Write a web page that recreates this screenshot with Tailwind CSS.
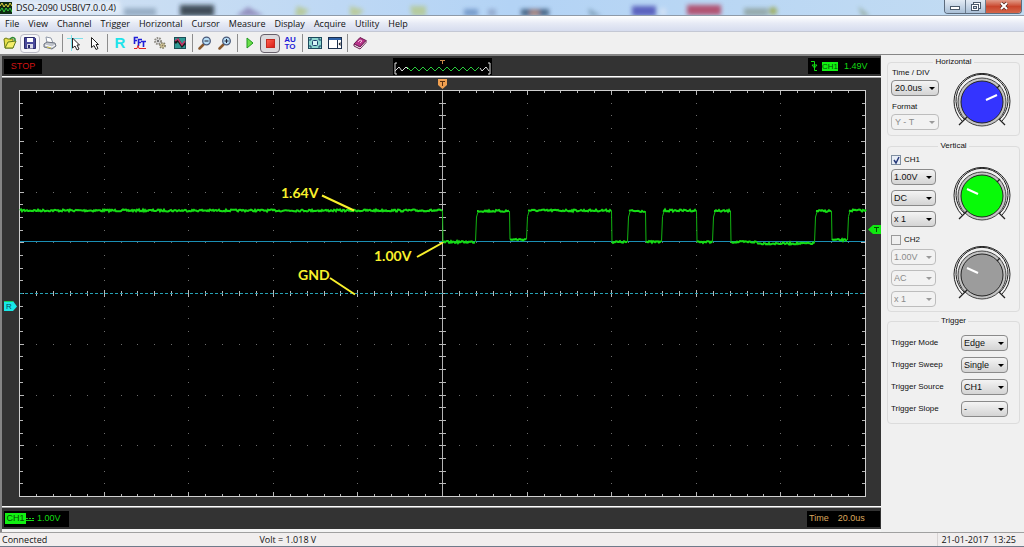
<!DOCTYPE html>
<html lang="en">
<head>
<meta charset="utf-8">
<title>DSO-2090 USB(V7.0.0.4)</title>
<script src="https://cdn.jsdelivr.net/npm/@tailwindcss/browser@4"></script>
</head>
<body class="min-h-screen flex flex-col bg-[#f0f0f0] font-['Open_Sans',sans-serif] text-[9px] text-[#111] overflow-hidden">

<!-- Title bar -->
<header class="relative h-4 shrink-0 flex items-center bg-gradient-to-r from-[#d3e2f2] via-[#b3d3f5] to-[#c3dcf2] border-b border-[#8e9aa8]">
  <svg class="absolute inset-0 w-full h-full" viewBox="0 0 1024 15" preserveAspectRatio="none" aria-hidden="true">
    <defs><filter id="glass" x="-20%" y="-60%" width="140%" height="220%"><feGaussianBlur stdDeviation="2"/></filter></defs>
    <g filter="url(#glass)" opacity=".85">
      <rect x="124" y="8" width="32" height="8" fill="#8fa6bd"/>
      <rect x="180" y="5" width="34" height="11" fill="#2c3440"/>
      <path d="M236 16l12-9 16 9z" fill="#8a83b5"/>
      <path d="M297 6l12 4-6 6h-8z" fill="#b5c78c"/>
      <path d="M350 6l14 4-6 6h-8z" fill="#b9c98f"/>
      <path d="M410 6h16v10h-14z" fill="#b5c98f"/>
      <rect x="464" y="9" width="14" height="7" fill="#6d93c4"/><rect x="488" y="9" width="8" height="7" fill="#8fa5c9"/>
      <rect x="521" y="9" width="28" height="7" fill="#3b5878"/><rect x="530" y="10" width="9" height="6" fill="#a5786a"/>
      <path d="M588 8l14 8h-12z" fill="#7b9cb5"/>
      <rect x="632" y="6" width="24" height="10" fill="#4b4fb5"/><rect x="660" y="8" width="6" height="8" fill="#d5e2f5"/>
      <rect x="687" y="5" width="34" height="10" fill="#b03c5c"/>
      <rect x="744" y="8" width="24" height="8" fill="#8fa3a0"/><circle cx="773" cy="11" r="4" fill="#9aa84e"/>
      <path d="M858 6l12 10h-8z" fill="#93a99a"/>
      <rect x="10" y="1" width="110" height="13" fill="#e6eef8"/>
    </g>
  </svg>
  <svg class="relative w-3 h-3 shrink-0" viewBox="0 0 12 12" aria-hidden="true">
    <rect width="12" height="12" fill="#0d2a12"/>
    <path d="M0 4l2-3 2 4 2-3 2 3 2-4 2 3" stroke="#e2d23c" fill="none"/>
    <path d="M0 9l2-3 2 4 2-4 2 3 2-3 2 4" stroke="#35c93e" fill="none"/>
  </svg>
  <h1 class="relative ml-1 flex-1">DSO-2090 USB(V7.0.0.4)</h1>
  <div class="relative self-start flex h-[14px] mr-[2px] rounded-b border border-t-0 border-[#5c6b7c] overflow-hidden">
    <button aria-label="Minimize" class="w-[21px] flex justify-center bg-gradient-to-b from-[#e3ebf4] to-[#a9bfd6] border-r border-[#6b7b8c]"><svg class="w-[10px] h-3" viewBox="0 0 10 12"><rect x=".5" y="6.500" width="9" height="3" fill="#fff" stroke="#4b5a6b"/></svg></button>
    <button aria-label="Restore" class="w-5 flex justify-center bg-gradient-to-b from-[#e3ebf4] to-[#a9bfd6] border-r border-[#6b7b8c]"><svg class="w-[10px] h-3" viewBox="0 0 10 12"><rect x="2.500" y="2.500" width="7" height="6" fill="#fff" stroke="#4b5a6b"/><rect x=".5" y="4.500" width="7" height="6" fill="#fff" stroke="#4b5a6b"/><rect x="2.500" y="6.500" width="3" height="2" fill="#cfdbe8" stroke="#4b5a6b"/></svg></button>
    <button aria-label="Close" class="w-[35px] flex justify-center bg-gradient-to-b from-[#e09a88] via-[#c9452c] to-[#d4664a]"><svg class="w-[10px] h-3" viewBox="0 0 10 12"><path d="M2 3l6 6M8 3L2 9" stroke="#5b2a22" stroke-width="3.500"/><path d="M2 3l6 6M8 3L2 9" stroke="#fff" stroke-width="2"/></svg></button>
  </div>
</header>

<!-- Menu bar -->
<nav class="h-4 shrink-0 flex items-center bg-gradient-to-b from-white via-[#e6eaf5] to-[#d6dcee] border-b border-[#c4c8d4]">
  <button class="pl-[5px] pr-1">File</button><button class="pl-[5px] pr-1">View</button><button class="pl-[5px] pr-1">Channel</button><button class="pl-[5px] pr-1">Trigger</button><button class="pl-[5px] pr-1">Horizontal</button><button class="pl-[5px] pr-1">Cursor</button><button class="pl-[5px] pr-1">Measure</button><button class="pl-[5px] pr-1">Display</button><button class="pl-[5px] pr-1">Acquire</button><button class="pl-[5px] pr-1">Utility</button><button class="pl-[5px] pr-1">Help</button>
</nav>

<!-- Toolbar -->
<div role="toolbar" aria-label="Tools" class="h-[22px] shrink-0 flex items-center">
  <button aria-label="Open" class="w-5 h-5 flex items-center justify-center"><svg class="w-[14px] h-[14px]" viewBox="0 0 14 14"><path d="M1 3l2-1 2 1 5 0v9l-8 0z" fill="#e8e04a" stroke="#6b7a14"/><path d="M2 12l3-6 8-1-3 7z" fill="#f5ee6a" stroke="#5f7a1a"/><path d="M7 3q3-3 5 0v2" fill="none" stroke="#2f8a2f" stroke-width="1.500"/></svg></button>
  <button aria-label="Save" class="w-5 h-[19px] flex items-center justify-center border border-[#b9b9c4] rounded-sm bg-[#f7f7fa]"><svg class="w-3 h-3" viewBox="0 0 12 12"><path d="M.5.5h10l1 1v10H.5z" fill="#4a4a9c" stroke="#2a2a6b"/><rect x="3" y="1" width="6" height="4" fill="#fff"/><rect x="3" y="7" width="6" height="4.500" fill="#d8d8e8"/><rect x="4" y="8" width="2" height="3" fill="#2a2a6b"/></svg></button>
  <button aria-label="Print" class="w-5 h-5 flex items-center justify-center"><svg class="w-[14px] h-[14px]" viewBox="0 0 14 14"><path d="M4 7l-1-6 5 1 2 5z" fill="#fff" stroke="#8f98a8"/><path d="M1 8l3-2 8 1 1 3-4 3-8-2z" fill="#bfc3cb" stroke="#6d7380"/><path d="M2 9l7 2 3-2" fill="none" stroke="#fff"/><path d="M4 11l4 1" stroke="#d5c84a"/></svg></button>
  <span class="w-[5px] h-[18px] flex justify-center"><i class="w-px bg-[#8d8d8d]"></i></span>
  <button aria-label="Cross cursor" class="w-5 h-5 flex items-center justify-center"><svg class="w-4 h-4" viewBox="0 0 16 16"><path d="M0 3.500h16M4.500 0v16" stroke="#7fe0ea"/><path d="M5.500 3l7 7H10l2 4-2 1-2-4-2.500 2z" fill="#fff" stroke="#222"/></svg></button>
  <button aria-label="Pointer" class="w-5 h-5 flex items-center justify-center"><svg class="w-4 h-4" viewBox="0 0 16 16"><path d="M4.500 2.500l7 7H9l2 4-2 1-2-4-2.500 2z" fill="#fff" stroke="#222"/></svg></button>
  <span class="w-[5px] h-[18px] flex justify-center"><i class="w-px bg-[#8d8d8d]"></i></span>
  <button class="w-5 h-5 font-['Liberation_Sans',sans-serif] font-bold text-[15px] leading-5 text-[#1fe3ea]">R</button>
  <button aria-label="FFT" class="w-5 h-5 flex items-center justify-center"><svg class="w-[14px] h-[14px]" viewBox="0 0 14 14"><path d="M1.500 8V1.500H5M1.500 4.500H4M5.500 10V3.500H9M5.500 6.500H8M8 5.500h5M10.500 5.500V11" stroke="#2020d8" stroke-width="1.600" fill="none"/><path d="M1 12.500h3l1-3 1 3h7" stroke="#e02222" fill="none"/></svg></button>
  <button aria-label="Settings" class="w-5 h-5 flex items-center justify-center"><svg class="w-[14px] h-[14px]" viewBox="0 0 14 14"><circle cx="5" cy="5" r="3" fill="#ddd" stroke="#8f8c84" stroke-width="2" stroke-dasharray="1.500 1"/><circle cx="9.500" cy="9.500" r="2.500" fill="#e8dca0" stroke="#85806c" stroke-width="2" stroke-dasharray="1.500 1"/><circle cx="5" cy="5" r="1" fill="#555"/><circle cx="9.500" cy="9.500" r="1" fill="#876"/></svg></button>
  <button aria-label="Waveform" class="w-5 h-5 flex items-center justify-center"><svg class="w-3 h-3" viewBox="0 0 12 12"><rect x=".5" y=".5" width="11" height="11" fill="#2f9a94" stroke="#1c4f58"/><path d="M1 6l3-3 4 6 3-3" stroke="#1a1a1a" stroke-width="2.500" fill="none"/><path d="M1 4l3-2 4 6 3-4" stroke="#c23a6a" stroke-width="1.500" fill="none"/></svg></button>
  <span class="w-[5px] h-[18px] flex justify-center"><i class="w-px bg-[#8d8d8d]"></i></span>
  <button aria-label="Zoom out" class="w-5 h-5 flex items-center justify-center"><svg class="w-[14px] h-[14px]" viewBox="0 0 14 14"><path d="M1.500 12.500l4-4" stroke="#8a5a2c" stroke-width="2.500" stroke-linecap="round"/><circle cx="8.500" cy="5" r="3.800" fill="#b5dcf5" stroke="#4a5a7a" stroke-width="1.300"/><path d="M6.500 5h4" stroke="#223"/></svg></button>
  <button aria-label="Zoom in" class="w-5 h-5 flex items-center justify-center"><svg class="w-[14px] h-[14px]" viewBox="0 0 14 14"><path d="M1.500 12.500l4-4" stroke="#8a5a2c" stroke-width="2.500" stroke-linecap="round"/><circle cx="8.500" cy="5" r="3.800" fill="#b5dcf5" stroke="#4a5a7a" stroke-width="1.300"/><path d="M6.500 5h4M8.500 3v4" stroke="#223"/></svg></button>
  <span class="w-[5px] h-[18px] flex justify-center"><i class="w-px bg-[#8d8d8d]"></i></span>
  <button aria-label="Start" class="w-5 h-5 flex items-center justify-center"><svg class="w-3 h-3" viewBox="0 0 12 12"><path d="M3 1l6 5-6 5z" fill="#6be04a" stroke="#1f9a1f" stroke-linejoin="round"/></svg></button>
  <button aria-label="Stop" class="w-5 h-[19px] flex items-center justify-center border border-[#66606a] rounded-sm bg-[#dcdadd]"><i class="w-[9px] h-[9px] bg-gradient-to-br from-[#ff5a4a] to-[#d81818] border border-[#c42a20]"></i></button>
  <button class="w-5 h-5 font-['Liberation_Sans',sans-serif] font-bold text-[8px] leading-[7px] text-[#1c1cd8]">AU<br>TO</button>
  <span class="w-[5px] h-[18px] flex justify-center"><i class="w-px bg-[#8d8d8d]"></i></span>
  <button aria-label="Full screen" class="w-5 h-5 flex items-center justify-center"><svg class="w-[14px] h-3" viewBox="0 0 14 12"><rect x=".5" y=".5" width="13" height="11" fill="#8fd8d0" stroke="#1c4a5c"/><rect x="4.500" y="3.500" width="5" height="5" rx="1" fill="#d8f5f8" stroke="#1c3f6b"/><path d="M2 4V2h2M10 2h2v2M12 8v2h-2M4 10H2V8" stroke="#1c3f6b" fill="none"/></svg></button>
  <button aria-label="Side panel" class="w-5 h-5 flex items-center justify-center"><svg class="w-[14px] h-3" viewBox="0 0 14 12"><rect x=".5" y=".5" width="13" height="11" fill="#fff" stroke="#1c2f4c"/><path d="M1 2h12" stroke="#2f62a8" stroke-width="2"/><path d="M9.500 3v8" stroke="#1c2f4c"/><path d="M12.500 5L10.500 7l2 2z" fill="#111"/></svg></button>
  <span class="w-[5px] h-[18px] flex justify-center"><i class="w-px bg-[#8d8d8d]"></i></span>
  <button aria-label="Help" class="w-5 h-5 flex items-center justify-center"><svg class="w-[14px] h-[14px]" viewBox="0 0 14 14"><path d="M1 8l6-6.500 6 3L7 11z" fill="#b8348a" stroke="#6b1a50"/><path d="M1 8v2l6 3 6-6.500v-2L7 11z" fill="#fff" stroke="#6b1a50"/><path d="M5 6l2-2 2 1-2 2" fill="none" stroke="#f3b8dc"/></svg></button>
</div>

<div class="flex-1 flex">
  <!-- Oscilloscope -->
  <main class="flex-1 min-w-0 flex flex-col bg-[#333] border-t-2 border-l-2 border-[#868686] font-['Liberation_Sans',sans-serif]">
    <div class="h-5 flex items-center justify-between pl-[2px] pr-px">
      <div class="flex-1"><p class="w-[38px] h-[15px] bg-black text-[9px] leading-[15px] text-center text-[#d01414]">STOP</p></div>
      <svg class="w-[99px] h-[17px] bg-black" viewBox="0 0 99 17" role="img" aria-label="Trigger position">
        <path d="M4 5H2v11h2M95 5h2v11h-2" fill="none" stroke="#ddd"/>
        <path id="preview" fill="none" stroke="#29c93c"/>
        <path d="M2 13l4-4 3 4 4-4 2 2M87 10l2 3 4-4 3 4" fill="none" stroke="#ddd"/>
        <path d="M47 2.500h5M49.500 2v4" stroke="#c98a4a"/>
      </svg>
      <div class="flex-1 flex justify-end">
        <p class="w-[72px] h-[16px] bg-black flex items-center pl-[2px] text-[9px] leading-[9px] text-[#12dc12]">
          <svg class="w-2 h-3 mr-[4px]" viewBox="0 0 8 12" aria-hidden="true"><path d="M1 1.500h3.500v9H7M2 5h5L4.500 8z" fill="none" stroke="#12dc12"/></svg>
          <span class="w-4 h-[9px] bg-[#12f012] text-[#064a06] text-[8px] leading-[9px] text-center">CH1</span>
          <span class="ml-[6px]">1.49V</span>
        </p>
      </div>
    </div>
    <div class="h-[2px] bg-white border-b border-[#a0a0a0]"></div>
    <svg class="w-full h-auto block" viewBox="2 78 879 428" role="img" aria-label="Channel 1 waveform">
      <g shape-rendering="crispEdges">
        <rect x="19" y="90" width="847" height="407" fill="#000"/>
        <g id="grid"></g>
        <path d="M442.500 90V497" stroke="#b4b4b4"/>
        <g id="ticks"></g>
        <path d="M20 241.500H865" stroke="#1b8fb4"/>
        <path d="M20 293.500H865" stroke="#26a0b4" stroke-dasharray="3 2"/>
        <rect x="19.500" y="90.500" width="846" height="406" fill="none" stroke="#d0d0d0"/>
      </g>
      <path id="edges" fill="none" stroke="#12b512"/>
      <path id="trace" fill="none" stroke="#16dc16" stroke-width="2"/>
      <g stroke="#f8f02c" stroke-width="2"><path d="M322 195.500L354 210.500M417 257L443 242.500M330 278L355 294.500"/></g>
      <g fill="#f8f02c" font-family="Lato, sans-serif" font-weight="bold" font-size="14">
        <text x="281" y="198">1.64V</text><text x="374" y="261">1.00V</text><text x="298" y="280">GND</text>
      </g>
      <path d="M438 79h9v6l-4.500 4-4.500-4z" fill="#f0a050"/><path d="M440 81.500h5M442.500 81v5" stroke="#5a3010"/>
      <path d="M868 229.500l5-4.500h8v9h-8z" fill="#10e810"/><path d="M874 227.500h5M876.500 227v5" stroke="#064a06"/>
      <path d="M4 301h9l4 5.500-4 4.500H4z" fill="#18e8e8"/><path d="M4 301.500h9" stroke="#12d060"/><text x="6" y="309" font-family="Liberation Sans, sans-serif" font-size="8" fill="#0a4a5a">R</text>
    </svg>
    <div class="h-[2px] bg-white border-b border-[#a0a0a0]"></div>
    <div class="h-[21px] flex items-center justify-between pl-[2px] pr-px text-[9px]">
      <p class="w-[65px] h-4 bg-black flex items-center text-[#12dc12]">
        <span class="w-[21px] h-[11px] ml-px bg-[#12f012] text-[#064a06] leading-[11px] text-center">CH1</span>
        <svg class="w-2 h-2 mr-[3px]" viewBox="0 0 8 8" aria-hidden="true"><path d="M0 5.500h8" stroke="#12dc12"/><path d="M0 3.500h8" stroke="#12dc12" stroke-dasharray="2 1"/></svg>
        1.00V
      </p>
      <p class="w-[73px] h-4 bg-black flex items-center gap-[9px] pl-[2px] text-[#dba75e]"><span>Time</span><span>20.0us</span></p>
    </div>
    <div class="flex-1 min-h-[2px] bg-[#f4f4f4]"></div>
  </main>

  <!-- Controls -->
  <aside class="w-[143px] shrink-0 border-t border-[#868686] pt-[2px] pl-[6px] pr-1 font-['Liberation_Sans',sans-serif] text-[8px] leading-[10px]">
    <fieldset class="h-[79px] border border-[#dcdcdc] rounded-sm px-[3px] flex">
      <legend class="mx-auto px-[2px]">Horizontal</legend>
      <div class="flex-1 flex flex-col items-start pt-px">
        <label for="tdiv" class="h-3 pl-px">Time / DIV</label>
        <span class="relative flex"><select id="tdiv" class="appearance-none w-12 h-4 pl-[3px] text-[9px] rounded-sm border border-[#8a8a8a] bg-gradient-to-b from-[#f4f4f4] to-[#d4d4d4]"><option>20.0us</option></select><i class="absolute right-[4px] top-[7px] border-x-[3px] border-t-[3px] border-x-transparent border-t-black pointer-events-none"></i></span>
        <label for="fmt" class="mt-[6px] h-3 pl-px">Format</label>
        <span class="relative flex"><select id="fmt" disabled class="appearance-none w-12 h-4 pl-[3px] text-[9px] rounded-sm border border-[#bdbdbd] bg-[#f2f2f2] text-[#8a8a8a] opacity-100"><option>Y - T</option></select><i class="absolute right-[4px] top-[7px] border-x-[3px] border-t-[3px] border-x-transparent border-t-[#9a9a9a] pointer-events-none"></i></span>
      </div>
      <svg class="w-[58px] h-[58px] mt-[6px] mr-[5px]" viewBox="0 0 58 58" role="img" aria-label="Time base knob"><g fill="none" stroke="#222"><path d="M9 48A28 28 0 1 1 49 48" /><path d="M12 47A26 26 0 1 1 46 47"/><circle cx="29" cy="29" r="24" fill="#c4c4c4" stroke="#444"/><circle cx="29" cy="29" r="21" fill="#3434ff"/><path d="M6 52l8-8M52 52l-6-6M44 15l3-3" stroke-width="1.300"/></g><path d="M33 27l11-5" stroke="#fff" stroke-width="2"/></svg>
    </fieldset>

    <fieldset class="mt-[5px] h-[171px] border border-[#dcdcdc] rounded-sm px-[3px]">
      <legend class="mx-auto px-[2px]">Vertical</legend>
      <div class="flex pt-px">
        <div class="flex-1 flex flex-col items-start gap-[5px]">
          <label class="flex items-center gap-[3px] h-[10px] mt-[3px] -mb-px"><input type="checkbox" checked class="peer appearance-none w-[10px] h-[10px] border border-[#7f8fa0] bg-[#e8eef6]"><svg class="-ml-3 w-[9px] h-[9px] pointer-events-none" viewBox="0 0 9 9"><path d="M2 4l2 3 3-6" fill="none" stroke="#26397a" stroke-width="1.500"/></svg>CH1</label>
          <span class="relative flex"><select aria-label="CH1 volts" class="appearance-none w-[45px] h-4 pl-[2px] text-[9px] rounded-sm border border-[#8a8a8a] bg-gradient-to-b from-[#f4f4f4] to-[#d4d4d4]"><option>1.00V</option></select><i class="absolute right-[4px] top-[7px] border-x-[3px] border-t-[3px] border-x-transparent border-t-black pointer-events-none"></i></span>
          <span class="relative flex"><select aria-label="CH1 coupling" class="appearance-none w-[45px] h-4 pl-[2px] text-[9px] rounded-sm border border-[#8a8a8a] bg-gradient-to-b from-[#f4f4f4] to-[#d4d4d4]"><option>DC</option></select><i class="absolute right-[4px] top-[7px] border-x-[3px] border-t-[3px] border-x-transparent border-t-black pointer-events-none"></i></span>
          <span class="relative flex"><select aria-label="CH1 probe" class="appearance-none w-[45px] h-4 pl-[2px] text-[9px] rounded-sm border border-[#8a8a8a] bg-gradient-to-b from-[#f4f4f4] to-[#d4d4d4]"><option>x 1</option></select><i class="absolute right-[4px] top-[7px] border-x-[3px] border-t-[3px] border-x-transparent border-t-black pointer-events-none"></i></span>
        </div>
        <svg class="w-[58px] h-[58px] mt-[15px] mr-[5px]" viewBox="0 0 58 58" role="img" aria-label="CH1 knob"><g fill="none" stroke="#222"><path d="M9 48A28 28 0 1 1 49 48" /><path d="M12 47A26 26 0 1 1 46 47"/><circle cx="29" cy="29" r="24" fill="#c4c4c4" stroke="#444"/><circle cx="29" cy="29" r="21" fill="#08fa08"/><path d="M6 52l8-8M52 52l-6-6M44 15l3-3" stroke-width="1.300"/></g><path d="M14 22l11 5" stroke="#fff" stroke-width="2"/></svg>
      </div>
      <div class="flex mt-[5px]">
        <div class="flex-1 flex flex-col items-start gap-[5px]">
          <label class="flex items-center gap-[3px] h-[10px] mt-[3px] -mb-px"><input type="checkbox" class="appearance-none w-[10px] h-[10px] border border-[#9a9a9a] bg-[#f0f0f0]">CH2</label>
          <span class="relative flex"><select aria-label="CH2 volts" disabled class="appearance-none w-[45px] h-4 pl-[2px] text-[9px] rounded-sm border border-[#bdbdbd] bg-[#f2f2f2] text-[#8a8a8a] opacity-100"><option>1.00V</option></select><i class="absolute right-[4px] top-[7px] border-x-[3px] border-t-[3px] border-x-transparent border-t-[#9a9a9a] pointer-events-none"></i></span>
          <span class="relative flex"><select aria-label="CH2 coupling" disabled class="appearance-none w-[45px] h-4 pl-[2px] text-[9px] rounded-sm border border-[#bdbdbd] bg-[#f2f2f2] text-[#8a8a8a] opacity-100"><option>AC</option></select><i class="absolute right-[4px] top-[7px] border-x-[3px] border-t-[3px] border-x-transparent border-t-[#9a9a9a] pointer-events-none"></i></span>
          <span class="relative flex"><select aria-label="CH2 probe" disabled class="appearance-none w-[45px] h-4 pl-[2px] text-[9px] rounded-sm border border-[#bdbdbd] bg-[#f2f2f2] text-[#8a8a8a] opacity-100"><option>x 1</option></select><i class="absolute right-[4px] top-[7px] border-x-[3px] border-t-[3px] border-x-transparent border-t-[#9a9a9a] pointer-events-none"></i></span>
        </div>
        <svg class="w-[58px] h-[58px] mt-[14px] mr-[5px]" viewBox="0 0 58 58" role="img" aria-label="CH2 knob"><g fill="none" stroke="#222"><path d="M9 48A28 28 0 1 1 49 48" /><path d="M12 47A26 26 0 1 1 46 47"/><circle cx="29" cy="29" r="24" fill="#c4c4c4" stroke="#444"/><circle cx="29" cy="29" r="21" fill="#9c9c9c"/><path d="M6 52l8-8M52 52l-6-6M44 15l3-3" stroke-width="1.300"/></g><path d="M14 22l11 5" stroke="#fff" stroke-width="2"/></svg>
      </div>
    </fieldset>

    <fieldset class="mt-[4px] h-[108px] border border-[#dcdcdc] rounded-sm px-[3px]">
      <legend class="mx-auto px-[2px]">Trigger</legend>
      <div class="flex flex-col gap-[6px] mt-[9px] mr-[8px]">
        <div class="flex items-center justify-between"><label for="tm">Trigger Mode</label><span class="relative flex"><select id="tm" class="appearance-none w-[47px] h-4 pl-[2px] text-[9px] rounded-sm border border-[#8a8a8a] bg-gradient-to-b from-[#f4f4f4] to-[#d4d4d4]"><option>Edge</option></select><i class="absolute right-[4px] top-[7px] border-x-[3px] border-t-[3px] border-x-transparent border-t-black pointer-events-none"></i></span></div>
        <div class="flex items-center justify-between"><label for="tsw">Trigger Sweep</label><span class="relative flex"><select id="tsw" class="appearance-none w-[47px] h-4 pl-[2px] text-[9px] rounded-sm border border-[#8a8a8a] bg-gradient-to-b from-[#f4f4f4] to-[#d4d4d4]"><option>Single</option></select><i class="absolute right-[4px] top-[7px] border-x-[3px] border-t-[3px] border-x-transparent border-t-black pointer-events-none"></i></span></div>
        <div class="flex items-center justify-between"><label for="tso">Trigger Source</label><span class="relative flex"><select id="tso" class="appearance-none w-[47px] h-4 pl-[2px] text-[9px] rounded-sm border border-[#8a8a8a] bg-gradient-to-b from-[#f4f4f4] to-[#d4d4d4]"><option>CH1</option></select><i class="absolute right-[4px] top-[7px] border-x-[3px] border-t-[3px] border-x-transparent border-t-black pointer-events-none"></i></span></div>
        <div class="flex items-center justify-between"><label for="tsl">Trigger Slope</label><span class="relative flex"><select id="tsl" class="appearance-none w-[47px] h-4 pl-[2px] text-[9px] rounded-sm border border-[#8a8a8a] bg-gradient-to-b from-[#f4f4f4] to-[#d4d4d4]"><option>-</option></select><i class="absolute right-[4px] top-[7px] border-x-[3px] border-t-[3px] border-x-transparent border-t-black pointer-events-none"></i></span></div>
      </div>
    </fieldset>
  </aside>
</div>

<!-- Status bar -->
<footer class="h-[15px] shrink-0 flex items-center bg-[#f1eeee] border-t border-t-[#a0a0a0] border-b border-b-[#6f7a8a] pl-[2px] pr-2">
  <span class="w-1/4">Connected</span>
  <span class="flex-1 pl-[4px]">Volt = 1.018 V</span>
  <span class="border-l border-[#d8d4d4] pl-[3px] whitespace-pre">21-01-2017  13:25</span>
</footer>

<script>
  const X0 = 19.5, Y0 = 90.5, W = 846, H = 406, DX = W / 50, DY = H / 32;
  let dots = '', ticks = '';
  for (let c = 1; c < 10; c++) {
    const x = Math.round(X0 + c * 5 * DX - .5);
    for (let r = 1; r < 32; r++) dots += `M${x} ${Math.round(Y0 + r * DY - .5)}.5h1`;
  }
  for (let r = 1; r < 8; r++) {
    const y = Math.round(Y0 + r * 4 * DY - .5);
    for (let c = 1; c < 50; c++) dots += `M${Math.round(X0 + c * DX - .5)} ${y}.5h1`;
  }
  for (let c = 1; c < 50; c++) {
    const x = Math.round(X0 + c * DX - .5) + .5, n = c % 5 ? 2 : 4;
    ticks += `M${x} 91v${n}M${x} 496v-${n}M${x} ${c % 5 ? 291 : 290}v${c % 5 ? 5 : 7}`;
  }
  for (let r = 1; r < 32; r++) {
    const y = Math.round(Y0 + r * DY - .5) + .5, n = r % 4 ? 3 : 4;
    ticks += `M20 ${y}h${n}M865 ${y}h-${n}M439 ${y}h7`;
  }
  document.getElementById('grid').innerHTML = `<path d="${dots}" stroke="#6e6e6e"/>`;
  document.getElementById('ticks').innerHTML = `<path d="${ticks}" stroke="#b8b8b8"/>`;

  // Captured levels: start x, end x, height
  const levels = [[20,442,210.5],[443,475,242],[477,509,211],[510,526,239.5],[528,611,210.5],[612,627,242],[629,645,211],[646,661,242],
    [663,696,210.5],[697,712,242],[714,730,211],[731,757,242],[757,814,243.5],[816,831,211],[832,847,240],[849,866,210.5]];
  let seed = 7, trace = '', edges = '', prev = null;
  const noise = () => (seed = (seed * 16807) % 2147483647) / 2147483647 - .5;
  for (const [a, b, y] of levels) {
    if (prev) edges += y < prev[1] ? `M${prev[0]}.5 ${prev[1]}L${prev[0] + 1}.5 ${y + 6}L${a + 1} ${y + 1}` : `M${prev[0]}.5 ${prev[1]}L${a} ${y}`;
    trace += `M${a} ${y}`;
    for (let x = a + 1; x <= b; x++) trace += `L${x} ${(y + noise() * 2).toFixed(1)}`;
    prev = [b, y];
  }
  document.getElementById('trace').setAttribute('d', trace);
  document.getElementById('edges').setAttribute('d', edges);
  let p = 'M14 9';
  for (let i = 0; i < 18; i++) p += i % 2 ? 'l4-4' : 'l4 4';
  document.getElementById('preview').setAttribute('d', p);
</script>
</body>
</html>
